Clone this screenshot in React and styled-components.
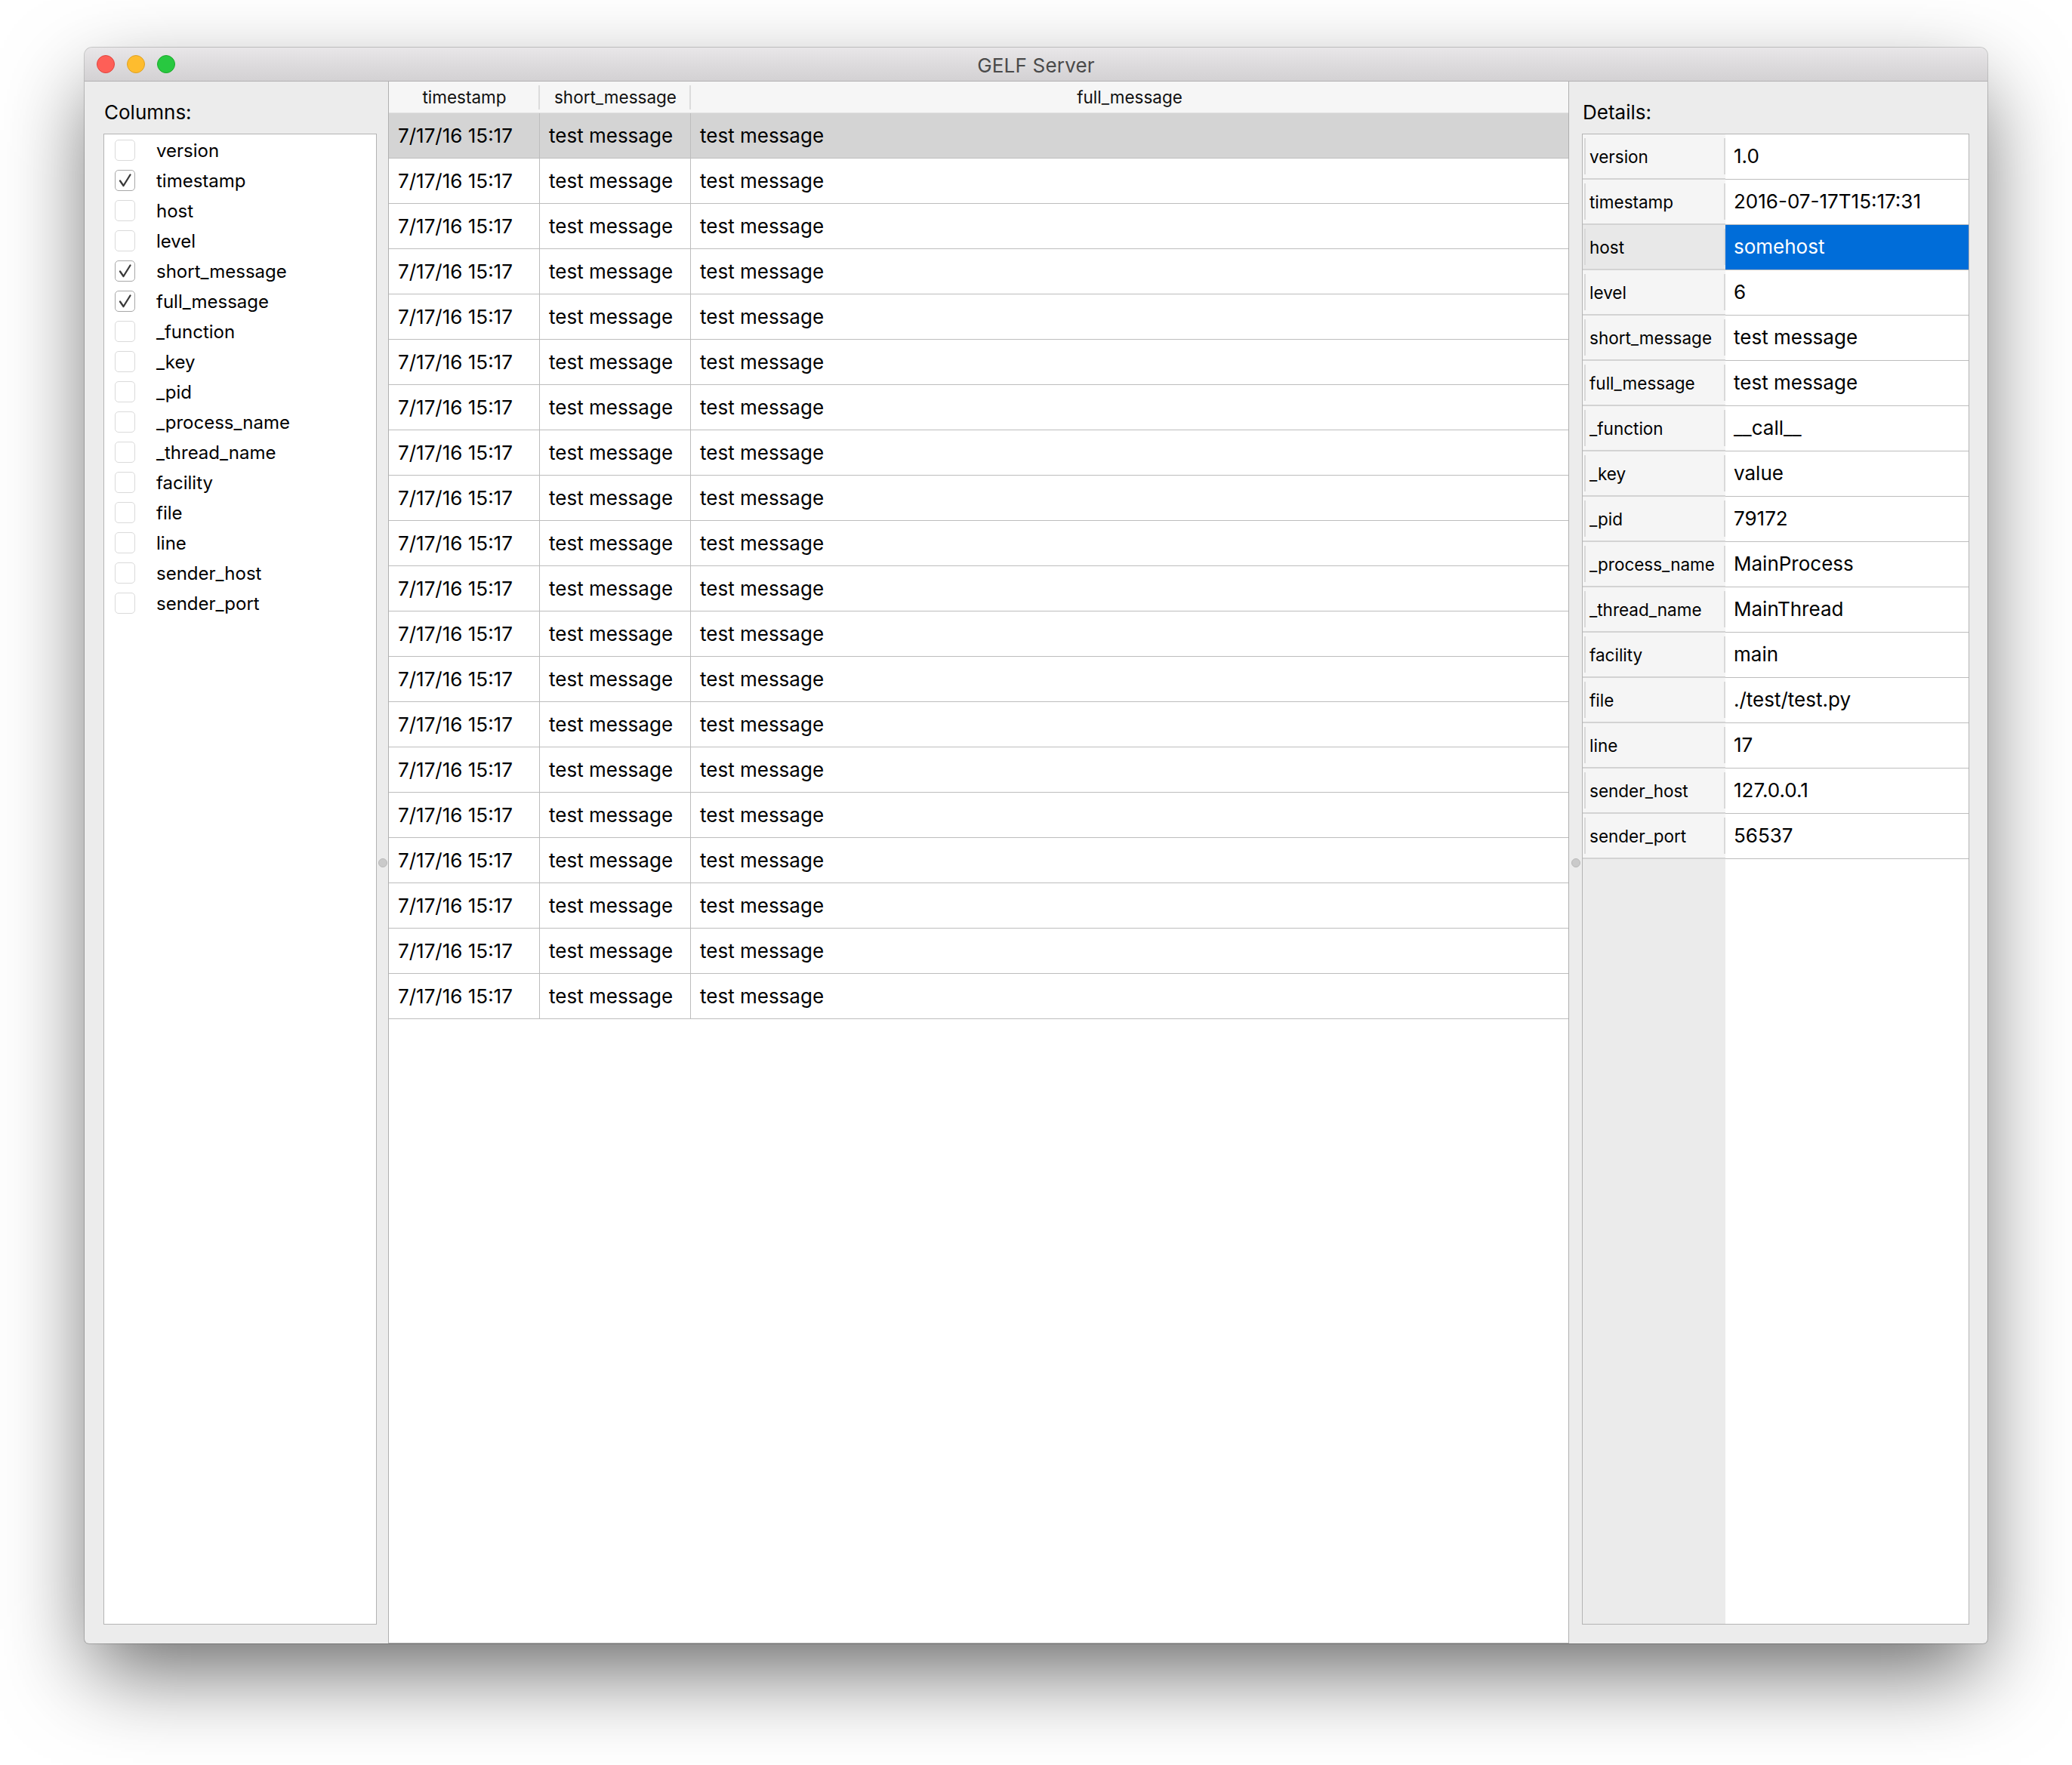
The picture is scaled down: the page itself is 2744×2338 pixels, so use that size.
import React from 'react';
import styled, { createGlobalStyle } from 'styled-components';

const GlobalStyle = createGlobalStyle`
  html, body {
    margin: 0;
    padding: 0;
    background: #ffffff;
  }
  body {
    font-family: Inter, "Liberation Sans", "DejaVu Sans", sans-serif;
    color: #000000;
    -webkit-font-smoothing: antialiased;
  }
`;

const Page = styled.div`
  width: 2744px;
  height: 2338px;
  box-sizing: border-box;
  padding: 63px 0 0 112px;
`;

const Window = styled.div`
  width: 2520px;
  height: 2114px;
  display: flex;
  flex-direction: column;
  background: #ececec;
  border-radius: 10px 10px 6px 6px;
  overflow: hidden;
  box-shadow: 0 0 0 1px rgba(0, 0, 0, 0.18), 0 45px 108px -10px rgba(0, 0, 0, 0.6);
`;

/* title bar */
const TitleBar = styled.div`
  flex: none;
  height: 44px;
  display: grid;
  grid-template-columns: 1fr auto 1fr;
  align-items: center;
  background: linear-gradient(#e8e6e8, #d3d1d3);
  border-bottom: 1px solid #b3b1b3;
`;

const Lights = styled.div`
  display: flex;
  gap: 16px;
  padding-left: 16px;
`;

const Light = styled.span`
  width: 24px;
  height: 24px;
  border-radius: 50%;
  box-sizing: border-box;
  background: ${p => p.color};
  border: 1px solid ${p => p.edge};
`;

const Title = styled.div`
  font-size: 26px;
  color: #4a4a4a;
  letter-spacing: 0.2px;
  padding-top: 2px;
`;

const Body = styled.div`
  flex: 1;
  display: flex;
  min-height: 0;
`;

/* side panels */
const SidePanel = styled.div`
  width: ${p => p.width}px;
  flex: none;
  box-sizing: border-box;
  padding: ${p => p.pad};
  display: flex;
  flex-direction: column;
`;

const PanelLabel = styled.div`
  font-size: 26px;
  line-height: 32px;
  margin-bottom: 12px;
  padding-left: 1px;
`;

const ListBox = styled.div`
  flex: 1;
  background: #ffffff;
  border: 1px solid #b4b4b4;
  padding-top: 1px;
`;

const ListItem = styled.div`
  height: 40px;
  display: flex;
  align-items: center;
  padding-left: 14px;
  font-size: 24px;
`;

const Box = styled.span`
  width: 27px;
  height: 28px;
  flex: none;
  box-sizing: border-box;
  border-radius: 5px;
  border: 1px solid ${p => (p.checked ? '#a8a8a8' : '#dadada')};
  background: #ffffff;
  margin-right: 28px;
  display: flex;
  align-items: center;
  justify-content: center;
`;

const Splitter = styled.div`
  width: ${p => p.width}px;
  flex: none;
  display: flex;
  align-items: center;
  justify-content: center;
`;

const Dot = styled.span`
  width: 12px;
  height: 12px;
  border-radius: 50%;
  box-sizing: border-box;
  background: #cacaca;
  border: 1px solid #b9b9b9;
`;

/* message table */
const TablePane = styled.div`
  width: 1564px;
  flex: none;
  box-sizing: border-box;
  background: #ffffff;
  border-left: 1px solid #b0b0b0;
  border-right: 1px solid #b0b0b0;
  border-bottom: 1px solid #b0b0b0;
  display: flex;
  flex-direction: column;
`;

const HeaderRow = styled.div`
  display: grid;
  grid-template-columns: 200px 200px 1fr;
  height: 42px;
  background: #f6f6f6;
  border-bottom: 1px solid #e2e2e2;
  box-sizing: border-box;
`;

const HeaderCell = styled.div`
  display: flex;
  align-items: center;
  justify-content: center;
  font-size: 22.5px;
  color: #111111;
  background: ${p =>
    p.last ? 'none' : 'linear-gradient(#dcdcdc, #dcdcdc) right 0 top 5px / 2px 32px no-repeat'};
`;

const Row = styled.div`
  display: grid;
  grid-template-columns: 200px 200px 1fr;
  height: 60px;
  box-sizing: border-box;
  border-bottom: 1px solid #bdbdbd;
  background: ${p => (p.selected ? '#d4d4d4' : '#ffffff')};
`;

const Cell = styled.div`
  display: flex;
  align-items: center;
  padding-left: 12px;
  font-size: 26px;
  white-space: nowrap;
  box-sizing: border-box;
  border-right: ${p => (p.last ? 'none' : '1px solid #bdbdbd')};
`;

/* details */
const DetailsBox = styled.div`
  flex: 1;
  display: flex;
  border: 1px solid #b4b4b4;
  background: #ffffff;
`;

const KeyColumn = styled.div`
  width: 189px;
  flex: none;
  background: #ebebeb;
  display: flex;
  flex-direction: column;
`;

const ValueColumn = styled.div`
  flex: 1;
  display: flex;
  flex-direction: column;
`;

const KeyCell = styled.div`
  height: 60px;
  flex: none;
  box-sizing: border-box;
  display: flex;
  align-items: center;
  padding-left: 9px;
  font-size: 22.5px;
  border-bottom: 2px solid #d3d3d3;
  background:
    linear-gradient(#d9d9d9, #d9d9d9) left 2px top 5px / 2px 48px no-repeat,
    linear-gradient(#d9d9d9, #d9d9d9) right 0 top 5px / 2px 48px no-repeat,
    ${p => (p.selected ? '#e8e8e8' : '#f5f5f5')};
`;

const ValueCell = styled.div`
  height: 60px;
  flex: none;
  box-sizing: border-box;
  display: flex;
  align-items: center;
  padding-left: 11px;
  padding-bottom: 2px;
  font-size: 26px;
  border-bottom: 1px solid #bdbdbd;
  background: ${p => (p.selected ? '#006dd9' : '#ffffff')};
  color: ${p => (p.selected ? '#ffffff' : '#000000')};
`;

const columns = [
  ['version', false],
  ['timestamp', true],
  ['host', false],
  ['level', false],
  ['short_message', true],
  ['full_message', true],
  ['_function', false],
  ['_key', false],
  ['_pid', false],
  ['_process_name', false],
  ['_thread_name', false],
  ['facility', false],
  ['file', false],
  ['line', false],
  ['sender_host', false],
  ['sender_port', false],
];

const details = [
  ['version', '1.0'],
  ['timestamp', '2016-07-17T15:17:31'],
  ['host', 'somehost'],
  ['level', '6'],
  ['short_message', 'test message'],
  ['full_message', 'test message'],
  ['_function', '__call__'],
  ['_key', 'value'],
  ['_pid', '79172'],
  ['_process_name', 'MainProcess'],
  ['_thread_name', 'MainThread'],
  ['facility', 'main'],
  ['file', './test/test.py'],
  ['line', '17'],
  ['sender_host', '127.0.0.1'],
  ['sender_port', '56537'],
];

const rows = Array.from({ length: 20 }, () => ['7/17/16 15:17', 'test message', 'test message']);

const Check = () => (
  <svg width="22" height="22" viewBox="0 0 22 22">
    <path d="M4 11.5 L8.5 18 L17.5 3.5" fill="none" stroke="#3a3a3a" strokeWidth="2.3" strokeLinecap="round" strokeLinejoin="round" />
  </svg>
);

export default function App() {
  return (
    <Page>
      <GlobalStyle />
      <Window>
        <TitleBar>
          <Lights>
            <Light color="#fe5f57" edge="#e0443e" />
            <Light color="#febc2e" edge="#dea123" />
            <Light color="#28c840" edge="#1aab29" />
          </Lights>
          <Title>GELF Server</Title>
          <div />
        </TitleBar>
        <Body>
          <SidePanel width={387} pad="25px 0 25px 25px">
            <PanelLabel>Columns:</PanelLabel>
            <ListBox>
              {columns.map(([name, on]) => (
                <ListItem key={name}>
                  <Box checked={on}>{on && <Check />}</Box>
                  {name}
                </ListItem>
              ))}
            </ListBox>
          </SidePanel>
          <Splitter width={15}>
            <Dot />
          </Splitter>
          <TablePane>
            <HeaderRow>
              <HeaderCell>timestamp</HeaderCell>
              <HeaderCell>short_message</HeaderCell>
              <HeaderCell last>full_message</HeaderCell>
            </HeaderRow>
            {rows.map((r, i) => (
              <Row key={i} selected={i === 0}>
                <Cell>{r[0]}</Cell>
                <Cell>{r[1]}</Cell>
                <Cell last>{r[2]}</Cell>
              </Row>
            ))}
          </TablePane>
          <Splitter width={17}>
            <Dot />
          </Splitter>
          <SidePanel width={538} pad="25px 25px 25px 0">
            <PanelLabel>Details:</PanelLabel>
            <DetailsBox>
              <KeyColumn>
                {details.map(([k]) => (
                  <KeyCell key={k} selected={k === 'host'}>{k}</KeyCell>
                ))}
              </KeyColumn>
              <ValueColumn>
                {details.map(([k, v]) => (
                  <ValueCell key={k} selected={k === 'host'}>{v}</ValueCell>
                ))}
              </ValueColumn>
            </DetailsBox>
          </SidePanel>
        </Body>
      </Window>
    </Page>
  );
}
